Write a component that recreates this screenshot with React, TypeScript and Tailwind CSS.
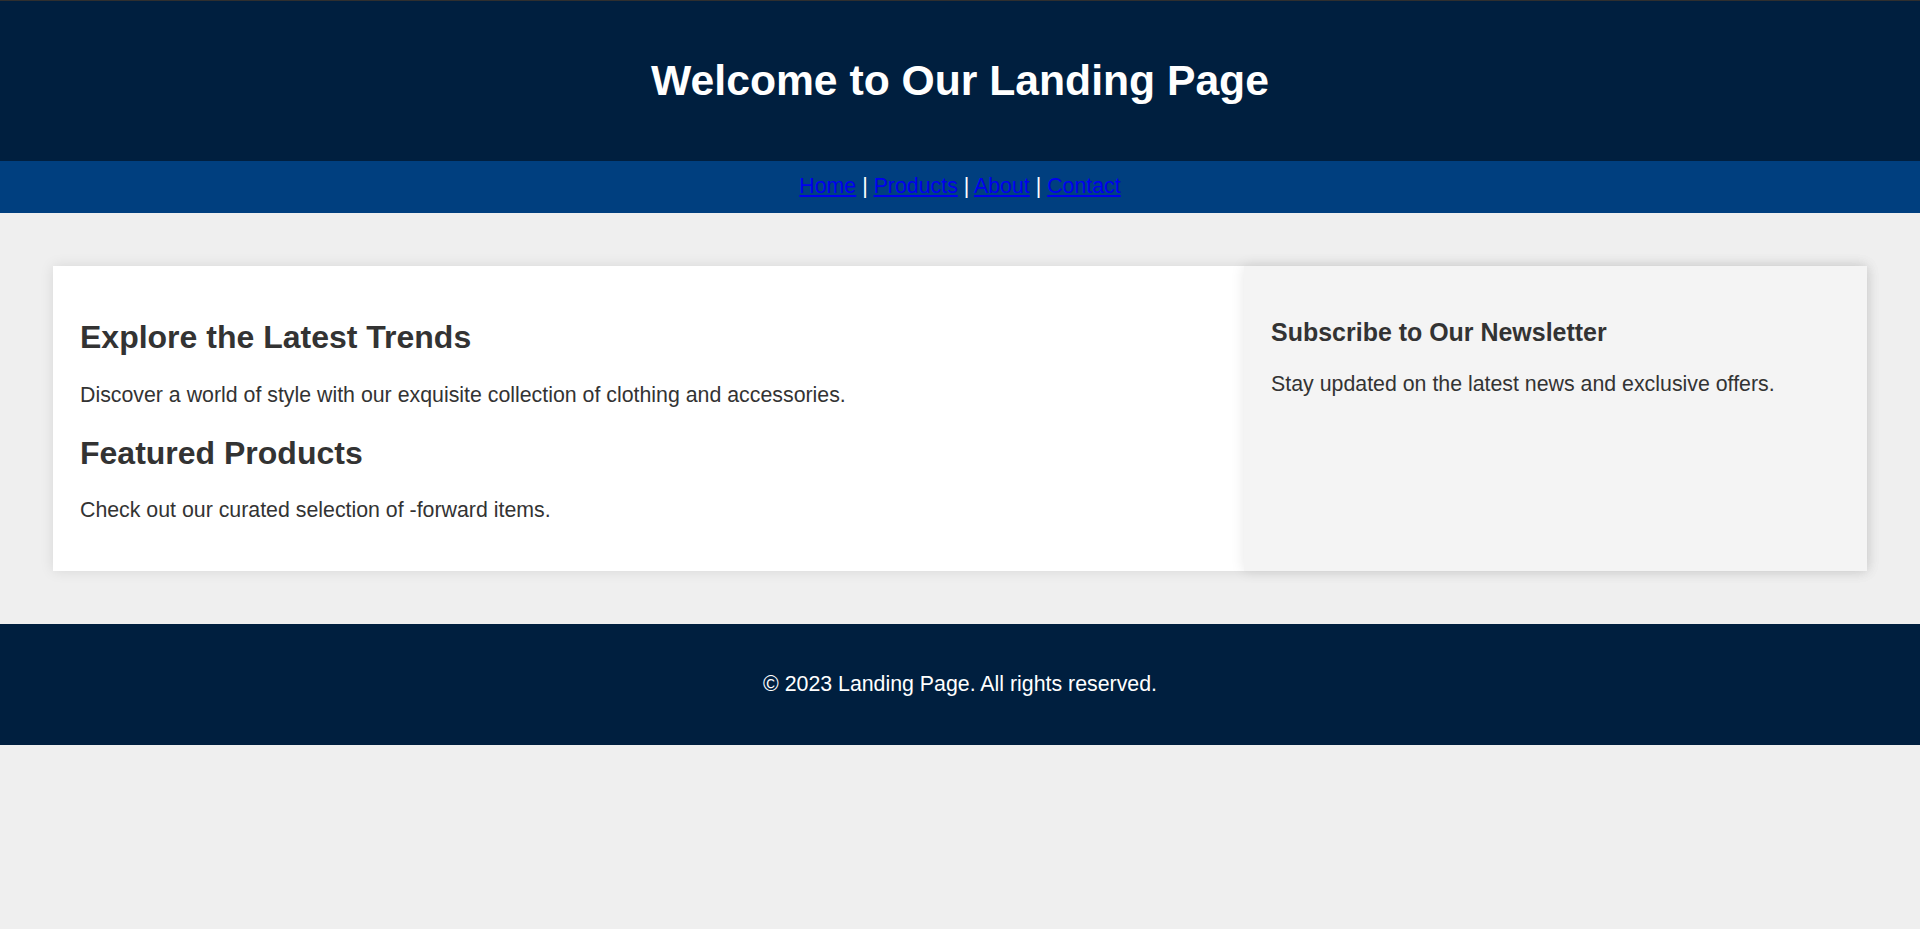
import React from 'react';

const NAV_LINKS = ['Home', 'Products', 'About', 'Contact'];

export default function App() {
  return (
    <div className="min-h-screen bg-[#efefef] text-[#333333] leading-[normal] font-['Liberation_Sans',Arial,sans-serif] border-t border-[#2f2f2f]">
      {/* Header */}
      <header className="bg-[#001f3f] py-[26.67px] text-center text-white">
        <h1 className="my-[28.59px] text-[42.67px] leading-[49.5px] font-bold">Welcome to Our Landing Page</h1>
      </header>

      {/* Nav */}
      <nav className="bg-[#003f7f] py-[13.33px] text-center text-[21.33px] leading-[25.33px] text-white">
        {NAV_LINKS.map((link, i) => (
          <React.Fragment key={link}>
            {i > 0 && ' | '}
            <a href="#" className="text-[#0000ee] underline">
              {link}
            </a>
          </React.Fragment>
        ))}
      </nav>

      {/* Content */}
      <main className="m-[53.33px] flex bg-white shadow-[0_0_13px_rgba(0,0,0,0.1)]">
        <section className="flex-[2] p-[26.67px]">
          <h2 className="my-[26.56px] text-[32px] font-bold">Explore the Latest Trends</h2>
          <p className="my-[21.33px] text-[21.33px]">
            Discover a world of style with our exquisite collection of clothing and accessories.
          </p>
          <h2 className="my-[26.56px] text-[32px] font-bold">Featured Products</h2>
          <p className="my-[21.33px] text-[21.33px]">Check out our curated selection of -forward items.</p>
        </section>
        <aside className="flex-1 bg-[#f4f4f4] p-[26.67px] shadow-[0_0_13px_rgba(0,0,0,0.1)]">
          <h3 className="my-[24.96px] text-[24.96px] font-bold">Subscribe to Our Newsletter</h3>
          <p className="my-[21.33px] text-[21.33px]">Stay updated on the latest news and exclusive offers.</p>
        </aside>
      </main>

      {/* Footer */}
      <footer className="bg-[#001f3f] py-[26.67px] text-center text-white">
        <p className="my-[21.33px] text-[21.33px]">&copy; 2023 Landing Page. All rights reserved.</p>
      </footer>
    </div>
  );
}
